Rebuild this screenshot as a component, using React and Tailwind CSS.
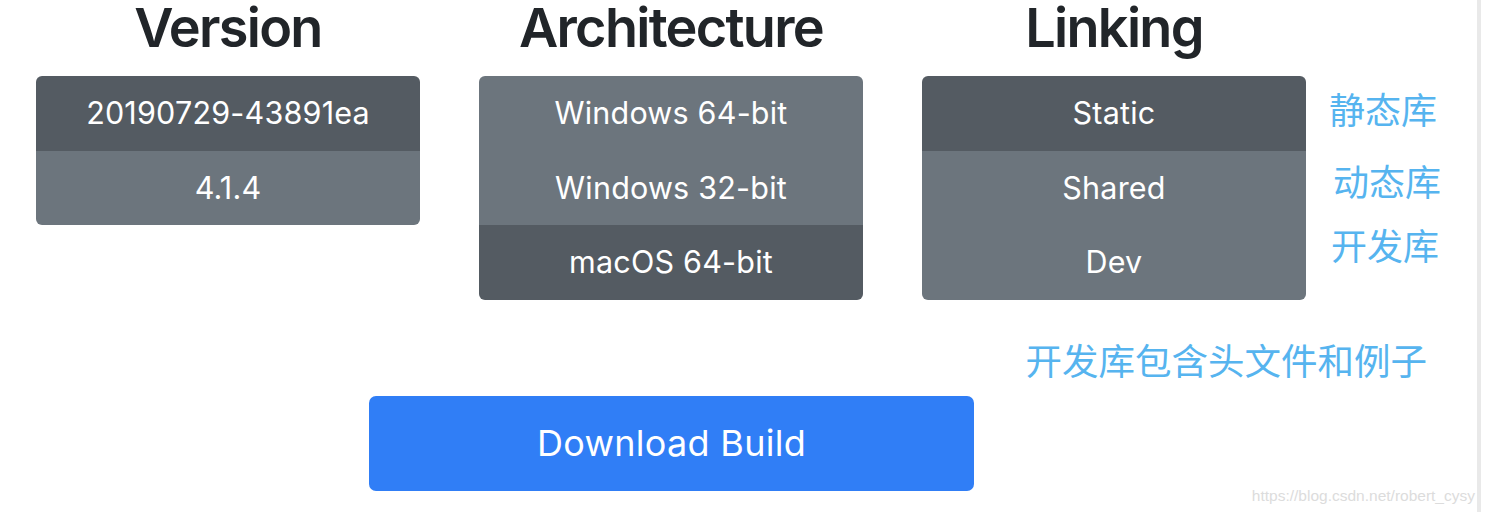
import React from 'react';

const versions = [
    { label: '20190729-43891ea', active: true },
    { label: '4.1.4', active: false },
];

const archs = [
    { label: 'Windows 64-bit', active: false },
    { label: 'Windows 32-bit', active: false },
    { label: 'macOS 64-bit', active: true },
];

const linkings = [
    { label: 'Static', active: true },
    { label: 'Shared', active: false },
    { label: 'Dev', active: false },
];

const OptionGroup = ({ title, options }) => (
    <div className="flex flex-col w-[384px]">
        <h1 className="text-center text-[54px] leading-[56px] font-semibold text-[#212529] tracking-[-1.7px] mb-[20px]">
            {title}
        </h1>
        <div className="flex flex-col rounded-[6px] overflow-hidden">
            {options.map((opt) => (
                <button
                    key={opt.label}
                    type="button"
                    className={`h-[74.5px] flex items-center justify-center text-white text-[30.5px] tracking-[0.2px] ${opt.active ? 'bg-[#545b62]' : 'bg-[#6c757d]'}`}
                >
                    {opt.label}
                </button>
            ))}
        </div>
    </div>
);

export default function App() {
    return (
        <div className="relative flex w-[1486px] h-[512px] overflow-hidden bg-white font-['Inter','Noto_Sans_CJK_SC',sans-serif]">
            <div className="flex flex-col w-[1477px]">
                <div className="flex pl-[36px] gap-[59px]">
                    <OptionGroup title="Version" options={versions} />
                    <OptionGroup title="Architecture" options={archs} />
                    <OptionGroup title="Linking" options={linkings} />
                    {/* hand-written notes next to the linking choices */}
                    <div className="flex flex-col pt-[90px] ml-[-36px] text-[36px] leading-[36px] text-[#56b4ef] font-['Noto_Sans_CJK_SC',sans-serif]">
                        <span>静态库</span>
                        <span className="mt-[36px] ml-[4px]">动态库</span>
                        <span className="mt-[28px] ml-[2px]">开发库</span>
                    </div>
                </div>

                <div className="flex justify-end pr-[50px] mt-[42px]">
                    <span className="text-[36.5px] leading-[36px] text-[#56b4ef] font-['Noto_Sans_CJK_SC',sans-serif]">
                        开发库包含头文件和例子
                    </span>
                </div>

                <div className="flex justify-center w-[1343px] mt-[18px]">
                    <button
                        type="button"
                        className="w-[605px] h-[95px] rounded-[7px] bg-[#307ef6] text-white text-[36px] tracking-[0.3px] flex items-center justify-center"
                    >
                        Download Build
                    </button>
                </div>
            </div>
            <div className="w-[4px] h-full bg-[#e9e9e9]" />
            <div className="flex-1 h-full bg-white" />

            <span className="absolute right-[11px] bottom-[8px] text-[15.5px] leading-[16px] text-[#dcdcdc] font-['Liberation_Sans',Arial,sans-serif]">
                https://blog.csdn.net/robert_cysy
            </span>
        </div>
    );
}
